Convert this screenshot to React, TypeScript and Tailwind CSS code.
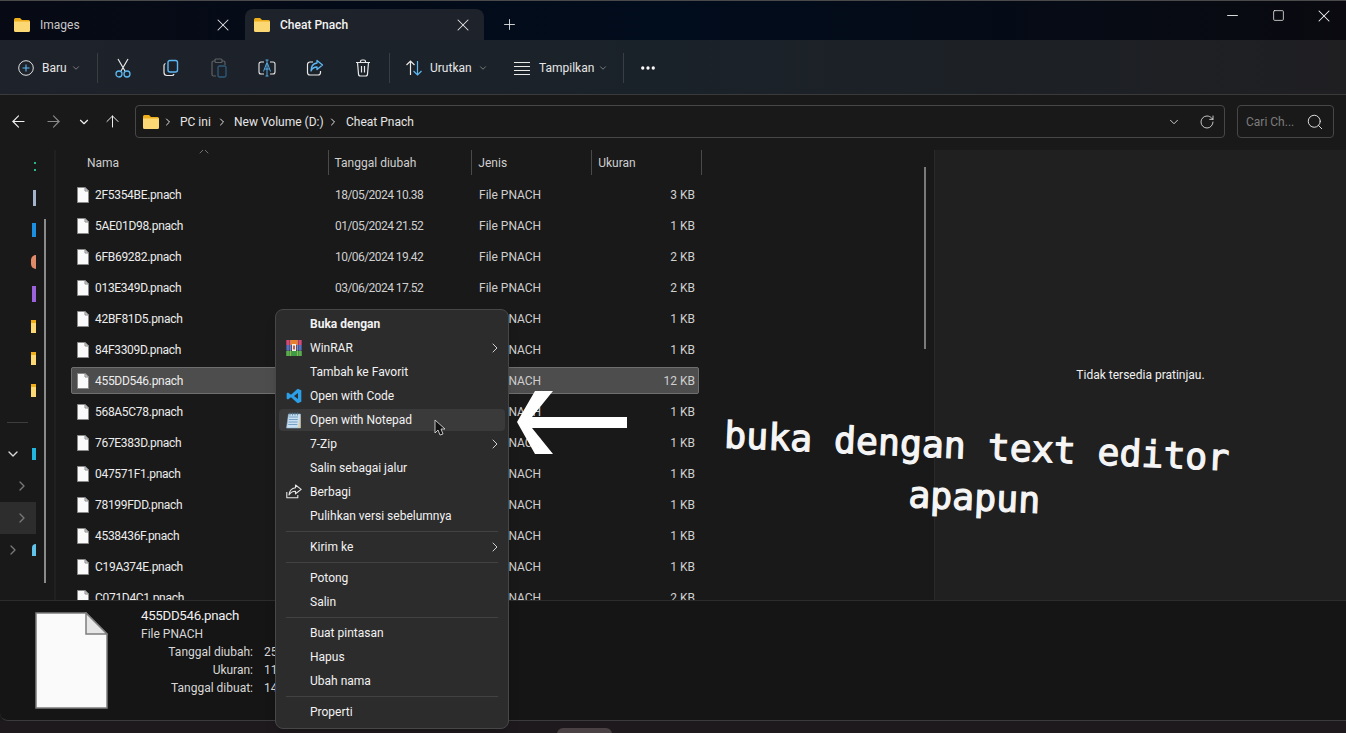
import React from "react";
import { ArrowLeft, ArrowRight, ArrowUp, ChevronDown, ChevronRight, ChevronUp, Minus, Plus, RotateCw, Search, Square, X, Ellipsis } from "lucide-react";

const Folder = ({ className = "" }: { className?: string }) => (
  <svg width="16" height="14" viewBox="0 0 16 14" className={className}>
    <path d="M0 1.5A1.5 1.5 0 0 1 1.5 0H6l2 2h6.5A1.5 1.5 0 0 1 16 3.5V5H0z" fill="#eeae1c" />
    <path d="M0 3.5h16v9A1.5 1.5 0 0 1 14.5 14h-13A1.5 1.5 0 0 1 0 12.5z" fill="#fbd873" />
  </svg>
);

const FileIcon = () => (
  <svg width="12" height="16" viewBox="0 0 12 16" className="shrink-0">
    <path d="M.5.5h7.500l3.500 3.500v11.500H.5z" fill="#fafafa" stroke="#8a8a8a" />
    <path d="M8 .5V4h3.500z" fill="#e2e2e2" stroke="#8a8a8a" />
  </svg>
);

const Sep = () => <div className="w-px h-[30px] bg-[#3a3d42] shrink-0" />;

const Scissors = () => (
  <svg width="18" height="20" viewBox="0 0 18 20" fill="none">
    <path d="M4 1l7 12M14 1L7 13" stroke="#e8e8e8" strokeWidth="1.2" />
    <circle cx="5" cy="16" r="3" stroke="#5cb8f2" strokeWidth="1.3" />
    <circle cx="13" cy="16" r="3" stroke="#5cb8f2" strokeWidth="1.3" />
  </svg>
);
const Copy = () => (
  <svg width="18" height="18" viewBox="0 0 18 18" fill="none">
    <path d="M3.500 4.500A2 2 0 0 0 2 6.500v7A3 3 0 0 0 5 16.500h5a2 2 0 0 0 2-1.500" stroke="#e8e8e8" strokeWidth="1.2" />
    <rect x="6" y="1.500" width="9.500" height="11.500" rx="2" stroke="#5cb8f2" strokeWidth="1.4" />
  </svg>
);
const Paste = () => (
  <svg width="18" height="20" viewBox="0 0 18 20" fill="none">
    <path d="M5 3H3.500A1.500 1.500 0 0 0 2 4.500v12A1.500 1.500 0 0 0 3.500 18H6M12 3h1.500A1.500 1.500 0 0 1 15 4.500V7" stroke="#5d6165" strokeWidth="1.2" />
    <rect x="5" y="1" width="7" height="3.500" rx="1" stroke="#5d6165" strokeWidth="1.200" />
    <rect x="8" y="8" width="8" height="11" rx="1.500" stroke="#2f5b7a" strokeWidth="1.300" />
  </svg>
);
const Rename = () => (
  <svg width="18" height="18" viewBox="0 0 18 18" fill="none">
    <path d="M6 3H3a2 2 0 0 0-2 2v8a2 2 0 0 0 2 2h3M12 3h3a2 2 0 0 1 2 2v8a2 2 0 0 1-2 2h-3" stroke="#e8e8e8" strokeWidth="1.100" />
    <path d="M9 1v16M7.500 1h3M7.500 17h3" stroke="#5cb8f2" strokeWidth=".9" />
    <path d="M5.500 12.500l3-8h1l3 8M6.700 10h4.600" stroke="#5cb8f2" strokeWidth=".9" />
  </svg>
);
const Share = () => (
  <svg width="18" height="18" viewBox="0 0 18 18" fill="none">
    <path d="M7 3H4a2.500 2.500 0 0 0-2.500 2.500v8A2.500 2.500 0 0 0 4 16h8a2.500 2.500 0 0 0 2.500-2.500V12" stroke="#e8e8e8" strokeWidth="1.200" />
    <path d="M11 1.500l5.500 4.500-5.500 4.500V8C8 8 6 9.500 5 12c0-4 2-7.500 6-8z" stroke="#5cb8f2" strokeWidth="1.300" strokeLinejoin="round" />
  </svg>
);
const Trash = () => (
  <svg width="16" height="18" viewBox="0 0 16 18" fill="none" stroke="#e8e8e8" strokeWidth="1.200">
    <path d="M1 3.500h14M5.500 3.500V2.500a1.500 1.500 0 0 1 1.500-1.500h2a1.500 1.500 0 0 1 1.500 1.500v1" />
    <path d="M2.500 3.500l1 11.500a2 2 0 0 0 2 2h5a2 2 0 0 0 2-2l1-11.500" />
    <path d="M6.500 7v6.500M9.500 7v6.500" />
  </svg>
);
const SortIcon = () => (
  <svg width="18" height="18" viewBox="0 0 18 18" fill="none" strokeWidth="1.200">
    <path d="M5.500 16V2M1.500 6l4-4 4 4" stroke="#e8e8e8" />
    <path d="M12.500 2v14M8.500 12l4 4 4-4" stroke="#5cb8f2" />
  </svg>
);
const ViewIcon = () => (
  <svg width="16" height="14" viewBox="0 0 16 14" fill="none" stroke="#e8e8e8" strokeWidth="1">
    <path d="M0 1.500h16M0 5.500h16M0 9.500h16M0 13.500h16" />
  </svg>
);

const WinRar = () => (
  <svg width="16" height="16" viewBox="0 0 16 16">
    <rect y="0" width="16" height="5" fill="#b4306f" />
    <rect y="5" width="16" height="5.500" fill="#3a55b0" />
    <rect y="11" width="16" height="5" fill="#3d9a45" />
    <path d="M2 0v16M4.500 0v16M11.500 0v16M14 0v16" stroke="#f2d060" strokeWidth=".6" opacity=".8" />
    <rect x="5" y="0" width="6" height="5" fill="#e8802a" />
    <rect x="6" y="4" width="4" height="7" fill="#f4f0e6" />
    <rect x="7.200" y="5.500" width="1.600" height="4" fill="#c23a2a" />
  </svg>
);
const VSCode = () => (
  <svg width="16" height="16" viewBox="0 0 24 24">
    <path d="M17.500 1L7.500 10.200 3 6.800 1 7.800v8.400l2 1 4.500-3.400 10 9.200 5.500-2.200V3.200zM18 7.500v9l-6-4.500z" fill="#2b9fe8" />
  </svg>
);
const Notepad = () => (
  <svg width="16" height="17" viewBox="0 0 16 17">
    <path d="M2.500 2h12v14h-14z" fill="#c9dff2" stroke="#8fb1cc" strokeWidth=".6" />
    <path d="M14.500 2v14H12z" fill="#e8c98a" opacity=".7" />
    <path d="M3 5h9M2.800 7.500h9M2.500 10h9M2.300 12.500h9" stroke="#5f8fb4" strokeWidth=".8" />
    <path d="M4 .5v3M6.500 .5v3M9 .5v3M11.500 .5v3" stroke="#4d7896" strokeWidth=".8" />
  </svg>
);
const MenuShare = () => (
  <svg width="16" height="15" viewBox="0 0 16 15" fill="none" stroke="#e6e6e6" strokeWidth="1.100" strokeLinejoin="round">
    <path d="M.8 8v5.700h11V11" />
    <path d="M9.500 1l5.700 4.400-5.700 4.400V7.300C6.500 7.300 4.600 8.300 3 11c.3-4 2.700-6.800 6.500-7.300z" />
  </svg>
);

const names = [
  ["2F5354BE.pnach", "18/05/2024 10.38", "3 KB"],
  ["5AE01D98.pnach", "01/05/2024 21.52", "1 KB"],
  ["6FB69282.pnach", "10/06/2024 19.42", "2 KB"],
  ["013E349D.pnach", "03/06/2024 17.52", "2 KB"],
  ["42BF81D5.pnach", "", "1 KB"],
  ["84F3309D.pnach", "", "1 KB"],
  ["455DD546.pnach", "", "12 KB"],
  ["568A5C78.pnach", "", "1 KB"],
  ["767E383D.pnach", "", "1 KB"],
  ["047571F1.pnach", "", "1 KB"],
  ["78199FDD.pnach", "", "1 KB"],
  ["4538436F.pnach", "", "1 KB"],
  ["C19A374E.pnach", "", "1 KB"],
  ["C071D4C1.pnach", "", "2 KB"],
];

type Item = { label?: string; icon?: React.ReactNode; bold?: boolean; sub?: boolean; hover?: boolean; sep?: boolean };
const menu: Item[] = [
  { label: "Buka dengan", bold: true },
  { label: "WinRAR", icon: <WinRar />, sub: true },
  { label: "Tambah ke Favorit" },
  { label: "Open with Code", icon: <VSCode /> },
  { label: "Open with Notepad", icon: <Notepad />, hover: true },
  { label: "7-Zip", sub: true },
  { label: "Salin sebagai jalur" },
  { label: "Berbagi", icon: <MenuShare /> },
  { label: "Pulihkan versi sebelumnya" },
  { sep: true },
  { label: "Kirim ke", sub: true },
  { sep: true },
  { label: "Potong" },
  { label: "Salin" },
  { sep: true },
  { label: "Buat pintasan" },
  { label: "Hapus" },
  { label: "Ubah nama" },
  { sep: true },
  { label: "Properti" },
];

const SideRow = ({ chevron, down, near, active, children }: { chevron?: boolean; down?: boolean; near?: boolean; active?: boolean; children?: React.ReactNode }) => (
  <div className={`h-8 w-9 flex items-center justify-end relative overflow-hidden shrink-0 ${active ? "bg-[#2d2d2d]" : ""}`}>
    {chevron && (
      <span className={`absolute top-[8px] ${near ? "left-[5px]" : "left-[14px]"}`}>
        {down ? <ChevronDown size={16} strokeWidth={2} color="#d8d8d8" /> : <ChevronRight size={16} strokeWidth={2} color="#777777" />}
      </span>
    )}
    {children}
  </div>
);

export default function App() {
  return (
    <div className="relative w-[1346px] h-[733px] overflow-hidden flex flex-col bg-[#191919] text-[12px] text-[#e6e6e6] font-['Roboto','Noto_Sans',sans-serif]">
      {/* title bar */}
      <div className="h-10 shrink-0 flex items-end border-t border-[#4a4a4a] bg-gradient-to-r from-[#070a14] via-[#010c1c] to-[#0a0a10]">
        <div className="w-[245px] h-[31px] shrink-0 flex items-center pl-[14px] pr-[12px]">
          <Folder />
          <span className="ml-[10px] text-[#c8c8c8] flex-1">Images</span>
          <X size={20} strokeWidth={1.25} />
        </div>
        <div className="w-[239px] h-[31px] shrink-0 flex items-center pl-[9px] pr-[11px] rounded-t-lg bg-[#1e222a]">
          <Folder />
          <span className="ml-[10px] text-[#f2f2f2] font-medium flex-1">Cheat Pnach</span>
          <X size={20} strokeWidth={1.25} />
        </div>
        <div className="h-[31px] flex items-center ml-[17px]">
          <Plus size={17} strokeWidth={1.25} />
        </div>
        <div className="flex-1" />
        <div className="self-start flex items-center h-[29px] -mr-px text-[#f5f5f5]">
          <div className="w-[46px] flex justify-center"><Minus size={17} strokeWidth={1.25} /></div>
          <div className="w-[46px] flex justify-center"><Square size={13} strokeWidth={1.4} /></div>
          <div className="w-[46px] flex justify-center"><X size={20} strokeWidth={1.25} /></div>
        </div>
      </div>

      {/* toolbar */}
      <div className="h-[55px] shrink-0 flex items-center pl-[18px] pt-px bg-gradient-to-r from-[#1e222a] via-[#1a2229] to-[#1f1f22] border-b border-[#3a3a3a]">
        <svg width="16" height="16" viewBox="0 0 16 16" fill="none" className="shrink-0">
          <circle cx="8" cy="8" r="7.300" stroke="#e0e0e0" strokeWidth="1" />
          <path d="M8 4.500v7M4.500 8h7" stroke="#5cb8f2" strokeWidth="1.100" />
        </svg>
        <span className="ml-[8px] w-[29px]">Baru</span>
        <ChevronDown size={10} strokeWidth={1.5} color="#b0b0b0" />
        <div className="ml-[16px]"><Sep /></div>
        <div className="ml-[16px] w-[18px] flex justify-center"><Scissors /></div>
        <div className="ml-[30px] w-[18px] flex justify-center"><Copy /></div>
        <div className="ml-[30px] w-[18px] flex justify-center"><Paste /></div>
        <div className="ml-[30px] w-[18px] flex justify-center"><Rename /></div>
        <div className="ml-[30px] w-[18px] flex justify-center"><Share /></div>
        <div className="ml-[30px] w-[18px] flex justify-center"><Trash /></div>
        <div className="ml-[17px]"><Sep /></div>
        <div className="ml-[15px]"><SortIcon /></div>
        <span className="ml-[7px] w-[48px]">Urutkan</span>
        <ChevronDown size={10} strokeWidth={1.5} color="#b0b0b0" />
        <div className="ml-[26px] w-[16px]"><ViewIcon /></div>
        <span className="ml-[9px] w-[59px]">Tampilkan</span>
        <ChevronDown size={10} strokeWidth={1.5} color="#b0b0b0" />
        <div className="ml-[15px]"><Sep /></div>
        <div className="ml-[15px]"><Ellipsis size={18} strokeWidth={2.4} color="#ffffff" /></div>
      </div>

      {/* address bar */}
      <div className="h-[55px] shrink-0 flex items-start pt-[10px]">
        <div className="w-[135px] h-[33px] shrink-0 flex items-center text-[#f0f0f0]">
          <ArrowLeft size={19} strokeWidth={1.4} className="ml-[9px]" />
          <ArrowRight size={19} strokeWidth={1.4} color="#8a8a8a" className="ml-[16px]" />
          <ChevronDown size={14} strokeWidth={2} className="ml-[14px]" />
          <ArrowUp size={19} strokeWidth={1.25} className="ml-[12px]" />
        </div>
        <div className="w-[1090px] h-[33px] shrink-0 rounded-[4px] border border-[#474747] flex items-center pl-[7px] pr-[9px]">
          <Folder />
          <ChevronRight size={12} strokeWidth={2} className="ml-[3px]" />
          <span className="ml-[6px] w-[34px]">PC ini</span>
          <ChevronRight size={12} strokeWidth={2} className="ml-[2px]" />
          <span className="ml-[6px] w-[90px]">New Volume (D:)</span>
          <ChevronRight size={12} strokeWidth={2} className="ml-[3px]" />
          <span className="ml-[7px]">Cheat Pnach</span>
          <div className="flex-1" />
          <ChevronDown size={14} strokeWidth={1.5} />
          <RotateCw size={16} strokeWidth={1.25} className="ml-[18px]" />
        </div>
        <div className="w-[97px] h-[33px] ml-[12px] shrink-0 rounded-[4px] border border-[#474747] flex items-center pl-[8px] pr-[9px]">
          <span className="flex-1 text-[#7c7c7c]">Cari Ch...</span>
          <Search size={18} strokeWidth={1.25} />
        </div>
      </div>

      {/* body */}
      <div className="h-[450px] shrink-0 flex overflow-hidden">
        {/* sidebar */}
        <div className="w-[54px] shrink-0 flex">
          <div className="w-9 flex flex-col shrink-0">
            <SideRow>
              <div className="w-[2px] h-[9px] flex flex-col justify-between"><div className="h-[2px] bg-[#25b889]" /><div className="h-[2px] bg-[#25b889]" /></div>
            </SideRow>
            <SideRow><div className="w-[3px] h-4 bg-[#a3b3cc]" /></SideRow>
            <SideRow><div className="w-1 h-[14px] bg-[#1d8fe0]" /></SideRow>
            <SideRow><div className="w-[5px] h-[14px] rounded-l-full bg-[#e08a6a]" /></SideRow>
            <SideRow><div className="w-1 h-4 bg-[#9a63dc]" /></SideRow>
            <SideRow><div className="w-[5px] h-[13px] bg-[#fbd873] border-t-[3px] border-[#eeae1c]" /></SideRow>
            <SideRow><div className="w-[5px] h-[13px] bg-[#fbd873] border-t-[3px] border-[#eeae1c]" /></SideRow>
            <SideRow><div className="w-[5px] h-[13px] bg-[#fbd873] border-t-[3px] border-[#eeae1c]" /></SideRow>
            <div className="h-8 w-9 flex items-center shrink-0"><div className="ml-[7px] w-[21px] h-px bg-[#3d3d3d]" /></div>
            <SideRow chevron down near><div className="w-1 h-3 bg-[#22b5de]" /></SideRow>
            <SideRow chevron />
            <SideRow chevron active />
            <SideRow chevron near><div className="w-1 h-3 rounded-tl-full bg-[#62c3ea]" /></SideRow>
          </div>
          <div className="w-[8px] shrink-0" />
          <div className="w-[2px] h-[364px] mt-[69px] bg-[#8a8a8a] shrink-0" />
        </div>
        <div className="w-[2px] shrink-0 bg-[#202020]" />

        {/* file list */}
        <div className="w-[878px] shrink-0 flex relative">
          <div className="w-[646px] shrink-0 pl-[15px] flex flex-col">
            <div className="h-[25px] shrink-0 flex text-[#cfcfcf]">
              <div className="relative w-[258px] border-r border-[#4a4a4a] pl-[16px] pt-[4px]">
                Nama
                <ChevronUp size={16} strokeWidth={1} className="absolute left-[125px] -top-[7px] text-[#a0a0a0]" />
              </div>
              <div className="w-[144px] border-r border-[#4a4a4a] pl-[6px] pt-[4px]">Tanggal diubah</div>
              <div className="w-[120px] border-r border-[#4a4a4a] pl-[6px] pt-[4px]">Jenis</div>
              <div className="w-[110px] border-r border-[#4a4a4a] pl-[6px] pt-[4px]">Ukuran</div>
            </div>
            <div className="flex flex-col gap-[4px] mt-[6px]">
              {names.map(([n, d, s], i) => (
                <div
                  key={n}
                  className={`h-[27px] w-[628px] shrink-0 flex items-center rounded-[2px] border ${i === 6 ? "bg-[#4d4d4d] border-[#6f6f6f]" : "border-transparent"}`}
                >
                  <div className="w-[23px] pl-[5px] shrink-0"><FileIcon /></div>
                  <span className="w-[240px] shrink-0 text-[#ececec] tracking-[-0.3px]">{n}</span>
                  <span className="w-[144px] shrink-0 text-[#cfcfcf] tracking-[-0.55px]">{d}</span>
                  <span className="w-[120px] shrink-0 text-[#cfcfcf]">File PNACH</span>
                  <span className="w-[96px] shrink-0 text-right text-[#cfcfcf]">{s}</span>
                </div>
              ))}
            </div>
          </div>
          <div className="ml-[222px] mt-[17px] w-[2px] h-[182px] bg-[#7a7a7a] shrink-0" />
        </div>

        {/* preview */}
        <div className="flex-1 bg-[#202020] border-l border-[#2a2a2a] flex items-center justify-center">
          <span className="text-[#f0f0f0]">Tidak tersedia pratinjau.</span>
        </div>
      </div>

      {/* details */}
      <div className="h-[121px] shrink-0 flex bg-[#151515] border-t border-b border-t-[#2c2c2c] border-b-[#3b3b3b] rounded-bl-lg">
        <div className="ml-[35px] mt-[11px] shrink-0">
          <svg width="73" height="97" viewBox="0 0 73 97">
            <path d="M1 1h50l21 21v74H1z" fill="#fafafa" stroke="#7d7d7d" strokeWidth="1.500" />
            <path d="M51 1v21h21z" fill="#e6e6e6" stroke="#7d7d7d" strokeWidth="1.500" />
          </svg>
        </div>
        <div className="ml-[33px] pt-[6px] w-[200px] shrink-0">
          <div className="text-[13.3px] leading-[18px] text-[#f0f0f0] tracking-[-0.3px]">455DD546.pnach</div>
          <div className="leading-[18px] text-[#d8d8d8]">File PNACH</div>
          {[["Tanggal diubah:", "25"], ["Ukuran:", "11"], ["Tanggal dibuat:", "14"]].map(([a, b]) => (
            <div key={a} className="flex leading-[18px] text-[#d8d8d8]">
              <span className="w-[112px] text-right shrink-0">{a}</span>
              <span className="ml-[11px]">{b}</span>
            </div>
          ))}
        </div>
      </div>

      {/* bottom strip */}
      <div className="flex-1 bg-[#1d191c] flex justify-center pt-[7px] pr-[177px]">
        <div className="w-[55px] h-[6px] rounded-t-md bg-[#494143]" />
      </div>

      {/* context menu */}
      <div className="absolute left-[275px] top-[309px] w-[234px] h-[420px] bg-[#2c2c2c] border border-[#474747] rounded-lg pt-[2px] pb-1 text-[#f2f2f2] shadow-lg">
        {menu.map((m, i) =>
          m.sep ? (
            <div key={i} className="h-[7px] mx-[10px] flex items-center"><div className="h-px w-full bg-[#424242]" /></div>
          ) : (
            <div key={i} className="h-6 px-[3px] py-px">
              <div className={`relative h-[22px] rounded-[4px] flex items-center pl-[31px] ${m.hover ? "bg-[#3a3a3a]" : ""} ${m.bold ? "font-bold" : ""}`}>
                {m.icon && <span className="absolute left-[7px] top-[3px] w-4 flex justify-center">{m.icon}</span>}
                {m.label}
                {m.sub && <ChevronRight size={16} strokeWidth={1.25} className="absolute right-[2px] top-[3px]" />}
              </div>
            </div>
          )
        )}
      </div>

      {/* cursor */}
      <svg width="13" height="17" viewBox="0 0 13 17" className="absolute left-[434px] top-[419px]">
        <path d="M1 1v13l3-3 2 5 3-1-2-5h4z" fill="#111111" stroke="#e8e8e8" strokeWidth=".8" />
      </svg>

      {/* annotation arrow */}
      <svg width="112" height="65" viewBox="0 0 112 65" className="absolute left-[516px] top-[390px]">
        <path d="M1 32L19 1H37L16 27H111V38H16L37 64H19z" fill="#ffffff" />
      </svg>

      {/* annotation text */}
      <div className="absolute left-[723px] top-[421px] w-[505px] rotate-[2.6deg] text-center text-[36.5px] leading-[51px] font-normal [-webkit-text-stroke:1.2px_#f5f5f5] text-[#f5f5f5] font-['DejaVu_Sans_Mono',monospace]">
        <div className="whitespace-nowrap">buka dengan text editor</div>
        <div>apapun</div>
      </div>
    </div>
  );
}
